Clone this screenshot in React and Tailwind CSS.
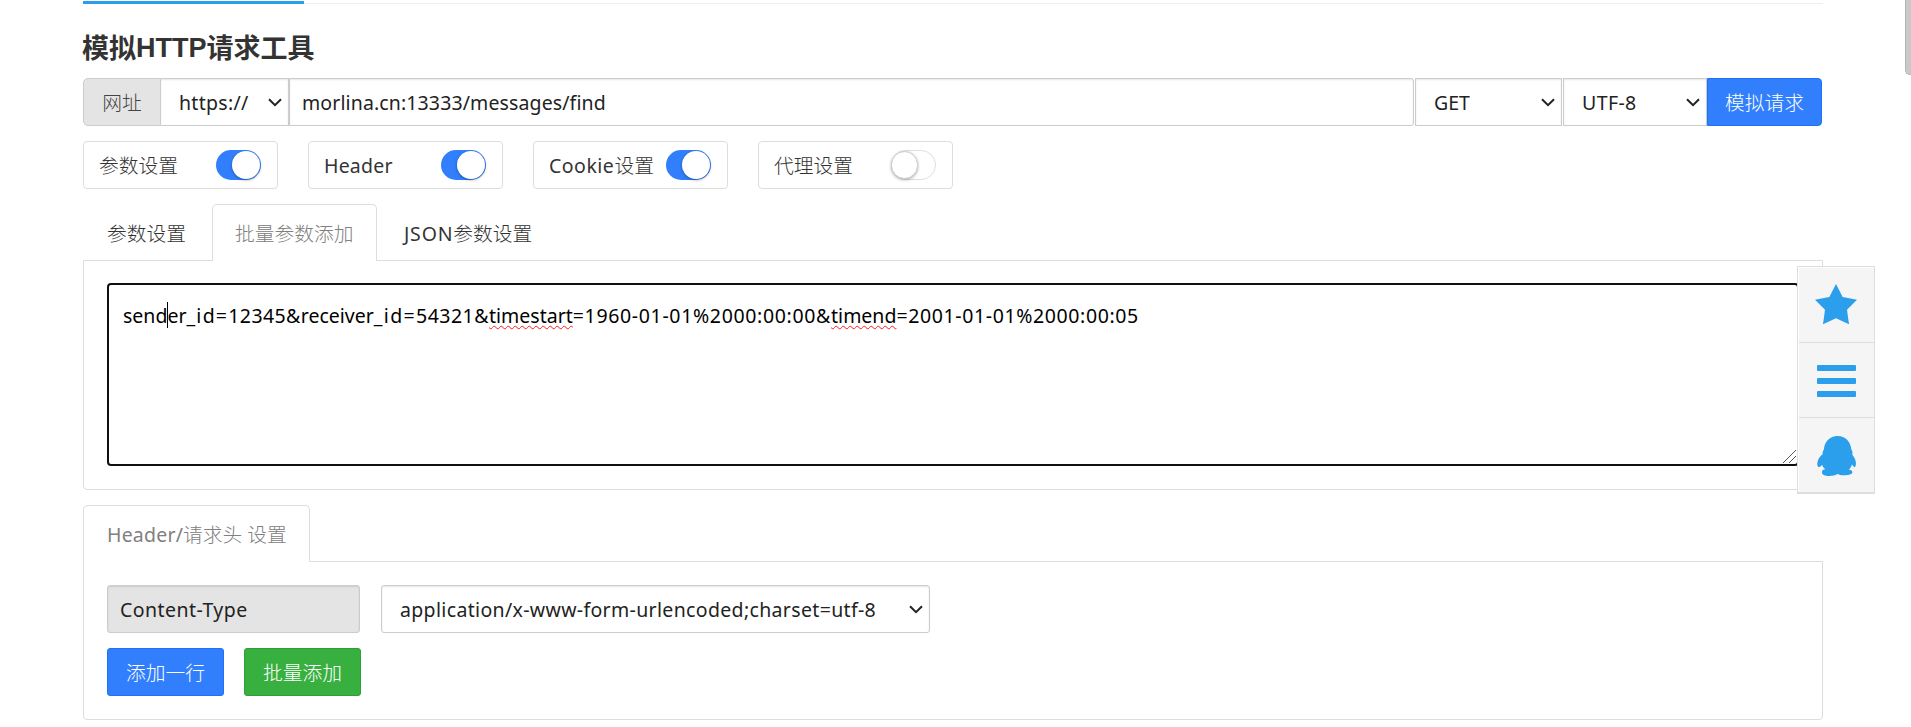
import React from "react";

function Chevron() {
  return (
    <svg width="14" height="9" viewBox="0 0 14 9" className="shrink-0" fill="none" stroke="#222" strokeWidth="2">
      <path d="M1 1.2 L7 7.2 L13 1.2" />
    </svg>
  );
}

function Switch({ on }) {
  return on ? (
    <span className="flex h-[30px] w-[45px] items-center justify-end rounded-full bg-[#317ffd] pr-px">
      <span className="h-7 w-7 rounded-full bg-white shadow-[0_1px_3px_rgba(0,0,0,0.35)]" />
    </span>
  ) : (
    <span className="flex h-[30px] w-[45px] items-center rounded-full border border-[#dfdfdf] bg-white">
      <span className="-ml-px h-7 w-[27px] rounded-full border border-[#ccc] bg-white shadow-[0_1px_3px_rgba(0,0,0,0.3)]" />
    </span>
  );
}

function Toggle({ children, on }) {
  return (
    <div className="flex h-12 w-[195px] items-center justify-between rounded-[4px] border border-[#ddd] pr-4 pl-[15px] text-[#333]">
      <span className="pt-0.5 text-[19.75px] font-light whitespace-nowrap">{children}</span>
      <Switch on={on} />
    </div>
  );
}

function Latin({ children, className = "" }) {
  return <span className={"text-[19.5px] font-normal " + className}>{children}</span>;
}

function Misspelled({ children }) {
  return (
    <span className="underline decoration-[#ff1a1a] decoration-wavy decoration-[1.3px] underline-offset-2">{children}</span>
  );
}

const field = "flex h-12 items-center border border-[#ccc] shadow-[inset_0_1px_2px_rgba(0,0,0,0.1)] whitespace-nowrap text-[19.5px] text-[#222]";
const button = "flex h-12 items-center justify-center border pt-0.5 text-[19.75px] font-light text-white";

export default function App() {
  return (
    <div className="relative h-[727px] w-[1911px] overflow-hidden bg-white font-['Noto_Sans','Noto_Sans_CJK_SC',sans-serif] leading-[30px]">
      <main className="ml-[83px] flex w-[1740px] flex-col">
        <div className="flex h-1 items-end border-b border-[#eee]">
          <div className="-mb-px h-[3px] w-[221px] bg-[#2b9fec]" />
        </div>

        <h1 className="mt-6 -ml-px flex h-10 items-center text-[27px] leading-10 font-bold whitespace-nowrap text-[#333]">
          模拟<span className="font-['Liberation_Sans']">HTTP</span>请求工具
        </h1>

        <div className="mt-[10px] flex w-[1739px]">
          <div className="flex h-12 w-[78px] items-center justify-center rounded-l-[5px] border border-[#ccc] bg-[#e4e4e4] pt-0.5 text-[19.75px] font-light text-[#444]">网址</div>
          <div className={field + " w-[128px] justify-between border-l-0 pr-[6px] pl-[18px]"}>
            <span className="pt-0.5 tracking-[0.3px]">https://</span>
            <Chevron />
          </div>
          <div className={field + " w-[1125px] rounded-r-[3px] pl-[12px]"}>
            <span className="pt-0.5 tracking-[0.12px]">morlina.cn:13333/messages/find</span>
          </div>
          <div className={field + " ml-px w-[147px] justify-between pr-[6px] pl-[18px]"}>
            <span className="pt-0.5">GET</span>
            <Chevron />
          </div>
          <div className={field + " ml-px w-[144px] justify-between pr-[6px] pl-[18px]"}>
            <span className="pt-0.5 tracking-[0.4px]">UTF-8</span>
            <Chevron />
          </div>
          <div className={button + " w-[115px] rounded-r-[4px] border-[#1d72fd] bg-[#317ffd]"}>模拟请求</div>
        </div>

        <div className="mt-[15px] flex gap-[30px]">
          <Toggle on>参数设置</Toggle>
          <Toggle on><Latin className="tracking-[0.2px]">Header</Latin></Toggle>
          <Toggle on><Latin className="tracking-[0.5px]">Cookie</Latin>设置</Toggle>
          <Toggle>代理设置</Toggle>
        </div>

        <nav className="z-10 mt-[15px] -mb-px flex h-[57px] items-stretch text-[19.75px] font-light whitespace-nowrap">
          <div className="flex w-[129px] items-center pt-0.5 pl-6 text-[#333]">参数设置</div>
          <div className="flex w-[165px] items-center rounded-t-[5px] border border-b-0 border-[#ddd] bg-white pt-0.5 pl-[22px] text-[#808080]">批量参数添加</div>
          <div className="flex items-center pt-0.5 pl-[27px] text-[#333]"><Latin className="tracking-[0.8px]">JSON</Latin>参数设置</div>
        </nav>
        <section className="h-[230px] rounded-b-[4px] border border-[#ddd] px-[23px] pt-[22px]">
          <div className="relative h-[183px] rounded-[4px] border-2 border-[#101010] px-[14px] pt-[16px] text-[19.5px] whitespace-nowrap text-black">
            <span>sender</span>
            <span className="tracking-[1.25px]">_id=</span>
            <span className="tracking-[0.4px]">12345&amp;</span>
            <span>receiver</span>
            <span className="tracking-[1.35px]">_id=</span>
            <span className="tracking-[0.5px]">54321&amp;</span>
            <Misspelled>timestart</Misspelled>
            <span className="tracking-[0.66px]">=1960-01-01%2000:00:00&amp;</span>
            <Misspelled>timend</Misspelled>
            <span className="tracking-[0.62px]">=2001-01-01%2000:00:05</span>
            <span className="absolute top-[17px] left-[58px] h-[26px] w-px bg-black" />
            <svg className="absolute right-0 bottom-0" width="14" height="14" viewBox="0 0 14 14" stroke="#555" strokeWidth="1">
              <path d="M0 13 L13 0 M6 13 L13 6" />
            </svg>
          </div>
        </section>

        <nav className="z-10 mt-[15px] -mb-px flex h-[57px] text-[19.75px] font-light whitespace-nowrap">
          <div className="flex w-[227px] items-center rounded-t-[5px] border border-b-0 border-[#ddd] bg-white pt-0.5 pl-[23px] text-[#808080]">
            <Latin className="tracking-[0.2px]">Header/</Latin>请求头<span className="w-[5px]" />设置
          </div>
        </nav>
        <section className="h-[159px] rounded-b-[4px] border border-[#ddd] px-[23px] pt-[23px]">
          <div className="flex">
            <div className={field + " w-[253px] rounded-[3px] bg-[#e4e4e4] pl-3"}>
              <span className="pt-0.5 tracking-[0.45px]">Content-Type</span>
            </div>
            <div className={field + " ml-[21px] w-[549px] justify-between rounded-[3px] pr-[6px] pl-[18px]"}>
              <span className="pt-0.5 tracking-[0.34px]">application/x-www-form-urlencoded;charset=utf-8</span>
              <Chevron />
            </div>
          </div>
          <div className="mt-[15px] flex gap-5">
            <div className={button + " w-[117px] rounded-[3px] border-[#1d72fd] bg-[#317ffd]"}>添加一行</div>
            <div className={button + " w-[117px] rounded-[3px] border-[#2e9e3a] bg-[#38b03f]"}>批量添加</div>
          </div>
        </section>
      </main>

      <aside className="absolute top-[266px] left-[1797px] z-20 flex h-[228px] w-[78px] flex-col border border-b-2 border-[#ddd] bg-white pt-px pl-px text-[#2b9fec]">
        <div className="flex h-[75px] items-start justify-start border-b border-[#ddd] bg-[#f5f5f5] pt-4 pl-4">
          <svg width="42" height="41" viewBox="345 131 126 123" fill="currentColor">
            <path d="M408 131 L428 170 L471 178 L441 208 L447 252 L408 234 L369 252 L375 208 L345 178 L388 170 Z" />
          </svg>
        </div>
        <div className="flex h-[75px] flex-col items-center justify-center gap-[7px] border-b border-[#ddd] bg-[#f5f5f5] pt-px">
          <span className="h-[6px] w-[39px] rounded-[1px] bg-[#2b9fec]" />
          <span className="h-[6px] w-[39px] rounded-[1px] bg-[#2b9fec]" />
          <span className="h-[6px] w-[39px] rounded-[1px] bg-[#2b9fec]" />
        </div>
        <div className="flex h-[74px] items-start justify-start bg-[#f5f5f5] pt-[18px] pl-[18px]">
          <svg width="39" height="40" viewBox="80 528 117 120" fill="currentColor">
            <path d="M142 528 C165 528 181 545 183 568 C187 574 187 579 186 584 C192 591 197 601 197 611 C196 619 194 622 192 621 C189 620 186 615 185 613 C183 620 180 625 176 629 C183 630 187 633 186 637 C186 643 178 645 170 645 C158 647 149 646 142 642 C134 647 120 649 107 647 C98 645 94 641 95 636 C95 631 99 629 105 628 C100 624 97 619 95 614 C92 619 87 622 84 621 C80 618 80 609 83 601 C86 593 92 587 97 583 C96 579 97 574 101 568 C102 545 119 528 142 528 Z" />
          </svg>
        </div>
      </aside>

      <div className="absolute top-0 right-0 h-[75px] w-[6px] rounded-bl-[5px] border-b border-l border-[#b5b5b5] bg-[#c9c9c9]" />
    </div>
  );
}
